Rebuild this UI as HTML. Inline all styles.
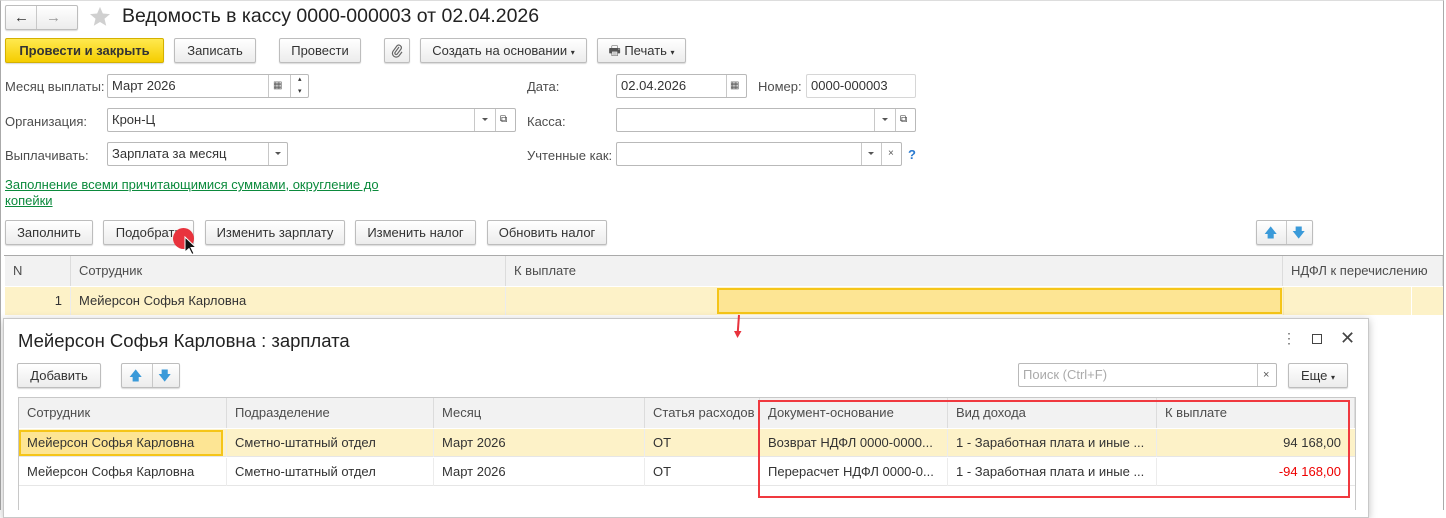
<!DOCTYPE html><html><head><meta charset="utf-8"><style>
*{box-sizing:border-box;margin:0;padding:0}
body{width:1446px;height:510px;overflow:hidden;background:#fff;font-family:"Liberation Sans",Arial,sans-serif;font-size:13px;color:#333;position:relative}
.a{position:absolute}
.btn{position:absolute;height:25px;border:1px solid #bdbdbd;border-radius:2px;background:linear-gradient(#fff,#ececec);box-shadow:0 1px 1px rgba(0,0,0,.15);text-align:center;line-height:23px;color:#333;white-space:nowrap}
.fld{position:absolute;height:24px;border:1px solid #b9b9b9;border-radius:2px;background:#fff;line-height:22px;padding-left:4px;color:#333}
.sep{position:absolute;top:0;bottom:0;border-left:1px solid #c8c8c8}
.lbl{position:absolute;color:#4d4d4d}
.dd{position:absolute;top:9px;width:0;height:0;border-left:3px solid transparent;border-right:3px solid transparent;border-top:3px solid #555}
.th{position:absolute;background:#f2f2f2;color:#4d4d4d;line-height:30px;padding-left:8px;border-right:1px solid #dcdcdc;white-space:nowrap;overflow:hidden}
.td{position:absolute;line-height:28px;padding-left:8px;white-space:nowrap;overflow:hidden;color:#333;border-right:1px solid #ececec}
</style></head><body>
<div class="a" style="left:0;top:0;width:1444px;height:510px;border-left:1px solid #aaa;border-right:1px solid #aaa;border-top:1px solid #ddd"></div>
<!-- nav -->
<div class="btn" style="left:5px;top:5px;width:73px;height:25px"><div class="sep" style="left:30px"></div>
<span class="a" style="left:8px;top:0;font-size:15px;font-weight:bold;color:#333">&#8592;</span><span class="a" style="left:40px;top:0;font-size:15px;font-weight:bold;color:#999">&#8594;</span></div>
<svg class="a" style="left:89px;top:6px" width="22" height="22" viewBox="0 0 24 24"><path d="M12 1l3.1 7.2 7.8.6-6 5.1 1.9 7.6L12 17.4 5.2 21.5l1.9-7.6-6-5.1 7.8-.6z" fill="#d0d0d0"/></svg>
<div class="a" style="left:122px;top:5px;font-size:19.5px;color:#222">Ведомость в кассу 0000-000003 от 02.04.2026</div>
<!-- toolbar -->
<div class="btn" style="left:5px;top:38px;width:159px;background:linear-gradient(#ffe94f,#f5cd00);border-color:#d4b100;font-weight:bold;color:#333">Провести и закрыть</div>
<div class="btn" style="left:174px;top:38px;width:82px">Записать</div>
<div class="btn" style="left:279px;top:38px;width:82px">Провести</div>
<div class="btn" style="left:384px;top:38px;width:26px"><svg width="12" height="14" viewBox="0 0 12 14" style="margin-top:5px"><path d="M8 3L4 8.5a1.4 1.4 0 002 1.8L10 5a2.6 2.6 0 00-4-3.2L2 7.3a3.8 3.8 0 006 4.6l3-4" fill="none" stroke="#666" stroke-width="1.2"/></svg></div>
<div class="btn" style="left:420px;top:38px;width:167px">Создать на основании <span style="font-size:8px">▾</span></div>
<div class="btn" style="left:597px;top:38px;width:89px"><span style="color:#555">🖶</span> Печать <span style="font-size:8px">▾</span></div>
<!-- row1 -->
<div class="lbl" style="left:5px;top:79px">Месяц выплаты:</div>
<div class="fld" style="left:107px;top:74px;width:202px">Март 2026<div class="sep" style="left:160px"></div><div class="sep" style="left:182px"></div>
<span class="a" style="left:165px;top:0;font-size:10px;color:#555">▦</span><span class="a" style="left:190px;top:-6px;font-size:7px">▴</span><span class="a" style="left:190px;top:6px;font-size:7px">▾</span></div>
<div class="lbl" style="left:527px;top:79px">Дата:</div>
<div class="fld" style="left:616px;top:74px;width:131px">02.04.2026<div class="sep" style="left:109px"></div><span class="a" style="left:113px;top:0;font-size:10px;color:#555">▦</span></div>
<div class="lbl" style="left:758px;top:79px">Номер:</div>
<div class="fld" style="left:806px;top:74px;width:110px;border-color:#d6d6d6">0000-000003</div>
<!-- row2 -->
<div class="lbl" style="left:5px;top:114px">Организация:</div>
<div class="fld" style="left:107px;top:108px;width:409px">Крон-Ц<div class="sep" style="left:366px"></div><div class="sep" style="left:387px"></div><div class="dd" style="left:374px"></div><span class="a" style="left:392px;top:0;font-size:10px">⧉</span></div>
<div class="lbl" style="left:527px;top:114px">Касса:</div>
<div class="fld" style="left:616px;top:108px;width:300px"><div class="sep" style="left:257px"></div><div class="sep" style="left:278px"></div><div class="dd" style="left:265px"></div><span class="a" style="left:283px;top:0;font-size:10px">⧉</span></div>
<!-- row3 -->
<div class="lbl" style="left:5px;top:148px">Выплачивать:</div>
<div class="fld" style="left:107px;top:142px;width:181px">Зарплата за месяц<div class="sep" style="left:160px"></div><div class="dd" style="left:167px"></div></div>
<div class="lbl" style="left:527px;top:148px">Учтенные как:</div>
<div class="fld" style="left:616px;top:142px;width:286px"><div class="sep" style="left:244px"></div><div class="sep" style="left:264px"></div><div class="dd" style="left:251px"></div><span class="a" style="left:271px;top:0;font-size:10px;color:#555">×</span></div>
<div class="a" style="left:908px;top:147px;color:#2a7ad0;font-weight:bold;font-size:13px">?</div>
<div class="a" style="left:5px;top:177px;color:#0b8a3c;text-decoration:underline;line-height:16px;width:400px">Заполнение всеми причитающимися суммами, округление до копейки</div>
<!-- buttons -->
<div class="btn" style="left:5px;top:220px;width:88px">Заполнить</div>
<div class="btn" style="left:103px;top:220px;width:91px">Подобрать</div>
<div class="btn" style="left:205px;top:220px;width:140px">Изменить зарплату</div>
<div class="btn" style="left:355px;top:220px;width:121px">Изменить налог</div>
<div class="btn" style="left:487px;top:220px;width:120px">Обновить налог</div>
<div class="btn" style="left:1256px;top:220px;width:57px"><div class="sep" style="left:29px"></div><span class="a" style="left:7px;top:0;color:#3a9ad9;font-size:13px">🡅</span><span class="a" style="left:35px;top:0;color:#3a9ad9;font-size:13px">🡇</span></div>
<div class="a" style="left:173px;top:228px;width:21px;height:21px;border-radius:50%;background:#e8333d"></div>
<svg class="a" style="left:184px;top:236px" width="14" height="20" viewBox="0 0 14 20"><path d="M1 1v15l4-3.5 3 6 2-1-3-6h5z" fill="#111" stroke="#fff" stroke-width="1"/></svg>
<!-- main table -->
<div class="a" style="left:4px;top:255px;width:1439px;border-top:1px solid #aaa"></div>
<div class="th" style="left:5px;top:256px;width:66px">N</div>
<div class="th" style="left:71px;top:256px;width:435px">Сотрудник</div>
<div class="th" style="left:506px;top:256px;width:777px">К выплате</div>
<div class="th" style="left:1283px;top:256px;width:160px">НДФЛ к перечислению</div>
<div class="a" style="left:5px;top:287px;width:1438px;height:28px;background:#fdf2c8"></div>
<div class="td" style="left:5px;top:287px;width:66px;text-align:right;padding-right:8px">1</div>
<div class="td" style="left:71px;top:287px;width:435px">Мейерсон Софья Карловна</div>
<div class="a" style="left:717px;top:288px;width:565px;height:26px;background:#fde594;border:2px solid #f5c518"></div>
<div class="a" style="left:1283px;top:287px;height:28px;border-left:1px solid #f3e6b8"></div>
<div class="a" style="left:1411px;top:287px;height:28px;border-left:1px solid #fff"></div>
<!-- popup -->
<div class="a" style="left:3px;top:318px;width:1366px;height:200px;background:#fff;border:1px solid #c8c8c8;box-shadow:0 2px 8px rgba(0,0,0,.25)"></div>
<svg class="a" style="left:733px;top:314px" width="10" height="26"><path d="M6 1L4.5 22" stroke="#e8333d" stroke-width="2"/><path d="M1 17l3.5 7 4-7z" fill="#e8333d"/></svg>
<div class="a" style="left:18px;top:330px;font-size:18.5px;color:#222">Мейерсон Софья Карловна : зарплата</div>
<div class="a" style="left:1282px;top:330px;font-size:14px;color:#666">⋮</div>
<div class="a" style="left:1312px;top:334px;width:10px;height:10px;border:1.5px solid #444"></div>
<div class="a" style="left:1340px;top:328px;font-size:18px;color:#444">✕</div>
<div class="btn" style="left:17px;top:363px;width:84px">Добавить</div>
<div class="btn" style="left:121px;top:363px;width:59px"><div class="sep" style="left:30px"></div><span class="a" style="left:7px;top:0;color:#3a9ad9;font-size:13px">🡅</span><span class="a" style="left:36px;top:0;color:#3a9ad9;font-size:13px">🡇</span></div>
<div class="fld" style="left:1018px;top:363px;width:259px;color:#aaa">Поиск (Ctrl+F)<div class="sep" style="left:238px"></div><span class="a" style="left:244px;top:0;color:#555;font-size:11px">×</span></div>
<div class="btn" style="left:1288px;top:363px;width:60px">Еще <span style="font-size:8px">▾</span></div>
<div class="a" style="left:18px;top:397px;width:1338px;height:113px;border:1px solid #c8c8c8;border-bottom:none"></div>
<div class="th" style="left:19px;top:398px;width:208px">Сотрудник</div>
<div class="th" style="left:227px;top:398px;width:207px">Подразделение</div>
<div class="th" style="left:434px;top:398px;width:211px">Месяц</div>
<div class="th" style="left:645px;top:398px;width:115px">Статья расходов</div>
<div class="th" style="left:760px;top:398px;width:188px">Документ-основание</div>
<div class="th" style="left:948px;top:398px;width:209px">Вид дохода</div>
<div class="th" style="left:1157px;top:398px;width:198px">К выплате</div>
<div class="a" style="left:19px;top:429px;width:1336px;height:28px;background:#fdf2c8;border-bottom:1px solid #e6e6e6"></div>
<div class="a" style="left:19px;top:458px;width:1336px;height:28px;border-bottom:1px solid #e6e6e6"></div>
<div class="a" style="left:19px;top:430px;width:204px;height:26px;background:#fde594;border:2px solid #f5c518"></div>
<div class="td" style="left:19px;top:429px;width:208px">Мейерсон Софья Карловна</div>
<div class="td" style="left:227px;top:429px;width:207px">Сметно-штатный отдел</div>
<div class="td" style="left:434px;top:429px;width:211px">Март 2026</div>
<div class="td" style="left:645px;top:429px;width:115px">ОТ</div>
<div class="td" style="left:760px;top:429px;width:188px">Возврат НДФЛ 0000-0000...</div>
<div class="td" style="left:948px;top:429px;width:209px">1 - Заработная плата и иные ...</div>
<div class="td" style="left:1157px;top:429px;width:184px;text-align:right;border:none">94 168,00</div>
<div class="td" style="left:19px;top:458px;width:208px">Мейерсон Софья Карловна</div>
<div class="td" style="left:227px;top:458px;width:207px">Сметно-штатный отдел</div>
<div class="td" style="left:434px;top:458px;width:211px">Март 2026</div>
<div class="td" style="left:645px;top:458px;width:115px">ОТ</div>
<div class="td" style="left:760px;top:458px;width:188px">Перерасчет НДФЛ 0000-0...</div>
<div class="td" style="left:948px;top:458px;width:209px">1 - Заработная плата и иные ...</div>
<div class="td" style="left:1157px;top:458px;width:184px;text-align:right;color:#e00;border:none">-94 168,00</div>
<div class="a" style="left:758px;top:400px;width:592px;height:98px;border:2px solid #f0393f"></div>
</body></html>
